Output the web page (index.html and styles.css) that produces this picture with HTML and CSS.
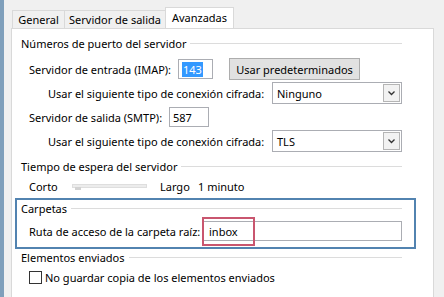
FILE: index.html
```html
<!DOCTYPE html>
<html lang="es">
<head>
  <meta charset="UTF-8">
  <title>Configuración de correo - Avanzadas</title>
  <link rel="stylesheet" href="styles.css">
</head>
<body>
<div class="window">
  <div class="edge"></div>
  <div class="dialog">
    <div class="tabs">
      <div class="tab tab-general">General</div>
      <div class="tab tab-salida">Servidor de salida</div>
      <div class="tab tab-active">Avanzadas</div>
    </div>

    <div class="panel">
      <div class="group-title"><span>Números de puerto del servidor</span></div>
      <div class="row row-imap">
        <span class="label label-imap">Servidor de entrada (IMAP):</span>
        <div class="textbox port-imap"><span class="selected">143</span></div>
        <button class="btn">Usar predeterminados</button>
      </div>
      <div class="row row-sub">
        <span class="label label-cifrada">Usar el siguiente tipo de conexión cifrada:</span>
        <div class="combo">
          <span class="combo-value">Ninguno</span>
          <span class="combo-arrow">
            <svg width="7" height="5" viewBox="0 0 7 5"><path d="M0.5 0.5 L3.5 3.5 L6.5 0.5" fill="none" stroke="#333" stroke-width="1.3"/></svg>
          </span>
        </div>
      </div>
      <div class="row">
        <span class="label label-smtp">Servidor de salida (SMTP):</span>
        <div class="textbox port-smtp">587</div>
      </div>
      <div class="row row-sub">
        <span class="label label-cifrada">Usar el siguiente tipo de conexión cifrada:</span>
        <div class="combo">
          <span class="combo-value">TLS</span>
          <span class="combo-arrow">
            <svg width="7" height="5" viewBox="0 0 7 5"><path d="M0.5 0.5 L3.5 3.5 L6.5 0.5" fill="none" stroke="#333" stroke-width="1.3"/></svg>
          </span>
        </div>
      </div>

      <div class="group-title group-gap"><span>Tiempo de espera del servidor</span></div>
      <div class="row row-slider">
        <span class="label label-corto">Corto</span>
        <span class="slider"><span class="thumb"></span></span>
        <span class="label-largo">Largo</span>
        <span>1 minuto</span>
      </div>

      <div class="group-marked">
        <div class="group-title"><span>Carpetas</span></div>
        <div class="row row-ruta">
          <span class="label label-ruta">Ruta de acceso de la carpeta raíz:</span>
          <div class="textbox path-box">
            inbox
            <span class="mark"></span>
          </div>
        </div>
      </div>

      <div class="group-title"><span>Elementos enviados</span></div>
      <div class="row row-check">
        <span class="checkbox"></span>
        <span>No guardar copia de los elementos enviados</span>
      </div>

      <div class="group-title group-last"><span>Elementos eliminados</span></div>
    </div>
  </div>
</div>
</body>
</html>
```

FILE: styles.css
```css
html, body {
  margin: 0;
  padding: 0;
  height: 100%;
  overflow: hidden;
  background: #f0f0f0;
}
body {
  font-family: "Noto Sans", "Open Sans", sans-serif;
  font-size: 11px;
  color: #000;
}
.window {
  display: flex;
  height: 100vh;
}
.edge {
  width: 4px;
  flex-shrink: 0;
  background: #7f9fbb;
}
.dialog {
  flex: 1;
  display: flex;
  flex-direction: column;
  min-height: 0;
  padding: 7px 10px 0 7px;
}
.tabs {
  display: flex;
  align-items: flex-end;
  height: 21px;
  flex-shrink: 0;
  padding-left: 1px;
}
.tab {
  height: 17px;
  line-height: 17px;
  border: 1px solid #d9d9d9;
  border-bottom: none;
  background: #f0f0f0;
  text-align: center;
  box-sizing: content-box;
}
.tab-general {
  width: 51px;
}
.tab-salida {
  width: 100px;
  border-left: none;
}
.tab-active {
  width: 67px;
  height: 21px;
  line-height: 19px;
  margin-bottom: -1px;
  margin-left: -1px;
  background: #fff;
}
.panel {
  flex: 1;
  min-height: 0;
  overflow: hidden;
  background: #fff;
  border: 1px solid #d9d9d9;
  border-bottom: none;
  padding: 6px 31px 0 9px;
}
.group-title {
  display: flex;
  align-items: center;
  height: 16px;
}
.group-title::after {
  content: "";
  flex: 1;
  border-top: 1px solid #dcdcdc;
  margin-left: 4px;
}
.group-gap {
  margin-top: 6px;
}
.group-last {
  margin-top: 7px;
}
.row {
  display: flex;
  align-items: center;
  height: 22px;
  padding-left: 8px;
  margin-top: 2px;
  white-space: nowrap;
}
.row-sub {
  padding-left: 27px;
}
.row-imap {
  margin-top: 7px;
}
.label {
  flex-shrink: 0;
}
.label-imap {
  width: 149px;
}
.label-cifrada {
  width: 224px;
}
.label-smtp {
  width: 140px;
}
.label-ruta {
  width: 174px;
}
.label-corto {
  width: 43px;
}
.textbox {
  height: 20px;
  box-sizing: border-box;
  border: 1px solid #abadb3;
  background: #fff;
  display: flex;
  align-items: center;
  padding-left: 3px;
}
.port-imap {
  width: 35px;
}
.port-smtp {
  width: 40px;
}
.selected {
  background: #3399ff;
  color: #fff;
  padding: 0 1px;
  line-height: 15px;
}
.btn {
  width: 131px;
  height: 22px;
  margin-left: 16px;
  border: 1px solid #adadad;
  background: #e1e1e1;
  font-family: inherit;
  font-size: 11px;
  color: #000;
  padding: 0;
}
.combo {
  width: 130px;
  height: 22px;
  box-sizing: border-box;
  border: 1px solid #abadb3;
  display: flex;
  align-items: center;
  justify-content: space-between;
  padding: 0 1px 0 4px;
}
.combo-arrow {
  width: 17px;
  height: 18px;
  box-sizing: border-box;
  border: 1px solid #b5b5b5;
  background: #f2f2f2;
  display: flex;
  align-items: center;
  justify-content: center;
}
.row-slider {
  height: 16px;
  margin-top: 4px;
}
.slider {
  width: 75px;
  height: 4px;
  box-sizing: border-box;
  background: #ececec;
  border: 1px solid #dedede;
  display: flex;
  align-items: flex-end;
}
.thumb {
  width: 6px;
  height: 3px;
  margin: 0 0 -3px 2px;
  background: #d2d2d2;
}
.label-largo {
  margin-left: 13px;
  width: 38px;
}
.group-marked {
  margin: 4px -14px 0 -6px;
  border: 2px solid #5283b0;
  padding: 0 12px 5px 4px;
}
.row-ruta {
  margin-top: 4px;
}
.path-box {
  width: 199px;
  padding-left: 5px;
  position: relative;
}
.mark {
  position: absolute;
  left: -2px;
  top: -5px;
  width: 53px;
  height: 29px;
  box-sizing: border-box;
  border: 2px solid #c9566f;
}
.row-check {
  height: 16px;
  margin-top: 4px;
}
.checkbox {
  width: 13px;
  height: 13px;
  box-sizing: border-box;
  border: 1px solid #333;
  background: #fff;
  margin-right: 3px;
}
```
